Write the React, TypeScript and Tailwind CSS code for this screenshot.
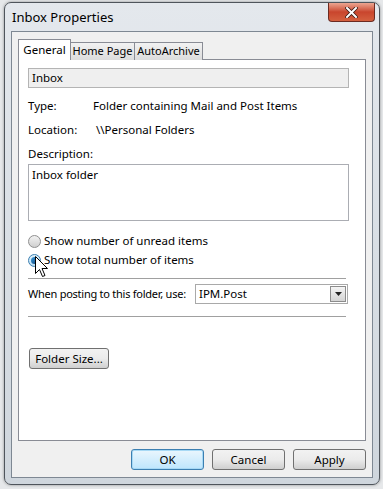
import React from "react";

const font = { fontFamily: '"Noto Sans", "Open Sans", sans-serif' };

function Radio({ checked }: { checked?: boolean }) {
  return (
    <span
      className={
        "flex h-[13px] w-[13px] shrink-0 items-center justify-center rounded-full border " +
        (checked
          ? "border-[#3c7fb1] bg-gradient-to-b from-[#dff1fb] to-[#b9dcf2]"
          : "border-[#8f8f8f] bg-gradient-to-b from-[#f2f2f2] to-[#cfcfcf]")
      }
    >
      {checked && (
        <span className="h-[7px] w-[7px] rounded-full bg-gradient-to-br from-[#3fa0e0] to-[#0d3f78]" />
      )}
    </span>
  );
}

function Button({ label, focused, className = "" }: { label: string; focused?: boolean; className?: string }) {
  return (
    <button
      className={
        "flex h-[21px] items-center justify-center whitespace-nowrap rounded-[3px] border text-[11.5px] text-black " +
        (focused
          ? "border-[#3c7fb1] bg-gradient-to-b from-[#eaf6fd] to-[#bee6fd] shadow-[inset_0_0_0_1px_#a7d9f5] "
          : "border-[#707070] bg-gradient-to-b from-[#f2f2f2] via-[#ebebeb] to-[#cfcfcf] ") +
        className
      }
    >
      {label}
    </button>
  );
}

export default function App() {
  return (
    <div className="relative h-[489px] w-[383px] overflow-hidden bg-[#e6e8ea] pl-[4px] pt-[2px]" style={font}>
      <div className="flex h-[483px] w-[376px] flex-col rounded-[7px] border border-[#4f555c] bg-gradient-to-b from-[#e4e8ed] via-[#d9dfe5] to-[#cfd6dd] shadow-[0_0_3px_rgba(0,0,0,0.4)]">
        {/* title bar */}
        <div className="flex h-[28px] items-start justify-between">
          <span className="whitespace-nowrap pl-[7px] pt-[5px] text-[13px] text-black">Inbox Properties</span>
          <div className="mr-[4px] flex h-[19px] w-[47px] items-center justify-center rounded-b-[4px] border border-t-0 border-[#6b2a21] bg-gradient-to-b from-[#eba591] via-[#c9452d] to-[#d4603f]">
            <svg width="13" height="11" viewBox="0 0 13 11">
              <path d="M2 1 L11 10 M11 1 L2 10" stroke="#3a1a14" strokeWidth="3.6" strokeLinecap="square" />
              <path d="M2 1 L11 10 M11 1 L2 10" stroke="#ffffff" strokeWidth="2" strokeLinecap="square" />
            </svg>
          </div>
        </div>

        {/* client area */}
        <div className="mx-[6px] flex h-[447px] flex-col border border-[#7e8893] bg-[#f0f0f0] px-[6px] pt-[7px]">
          {/* tabs */}
          <div className="relative z-10 flex h-[21px] items-end whitespace-nowrap text-[11px] text-black">
            <div className="flex h-[21px] w-[53px] items-center justify-center border border-b-0 border-[#898c95] bg-white pb-[1px] text-[11.5px]">
              General
            </div>
            <div className="flex h-[18px] w-[64px] items-center justify-center border border-l-0 border-b-0 border-[#898c95] bg-gradient-to-b from-[#f2f2f2] to-[#dcdcdc]">
              Home Page
            </div>
            <div className="flex h-[18px] w-[68px] items-center justify-center border border-l-0 border-b-0 border-[#898c95] bg-gradient-to-b from-[#f2f2f2] to-[#dcdcdc]">
              AutoArchive
            </div>
          </div>

          {/* tab page */}
          <div className="-mt-[1px] flex h-[382px] flex-col whitespace-nowrap border border-[#898c95] bg-white px-[9px] pt-[8px] text-[11.5px] text-black">
            <div className="flex h-[20px] w-[321px] items-center border border-[#b4b4b4] bg-[#efefef] pl-[3px]">
              Inbox
            </div>

            <div className="mt-[9px] flex h-[18px] items-center">
              <span className="w-[65px]">Type:</span>
              <span>Folder containing Mail and Post Items</span>
            </div>
            <div className="mt-[6px] flex h-[18px] items-center">
              <span className="w-[68px]">Location:</span>
              <span>\\Personal Folders</span>
            </div>
            <div className="mt-[6px] flex h-[18px] items-center">Description:</div>
            <div className="mt-[1px] h-[57px] w-[321px] border border-[#abadb3] bg-white pl-[3px] pt-[1px]">
              Inbox folder
            </div>

            <div className="mt-[11px] flex h-[18px] items-center gap-[3px]">
              <Radio />
              <span>Show number of unread items</span>
            </div>
            <div className="mt-[1px] flex h-[18px] items-center gap-[3px]">
              <Radio checked />
              <span>Show total number of items</span>
            </div>

            <div className="mt-[9px] h-[1px] w-[318px] bg-[#a0a0a0]" />

            <div className="mt-[5px] flex h-[20px] items-center">
              <span className="w-[167px] text-[11px] tracking-[-0.25px]">When posting to this folder, use:</span>
              <div className="flex h-[20px] w-[153px] items-center justify-between border border-[#a9a9a9] bg-white pl-[3px] pr-[1px]">
                <span>IPM.Post</span>
                <span className="flex h-[16px] w-[16px] items-center justify-center border border-[#8c8c8c] bg-gradient-to-b from-[#f4f4f4] to-[#d4d4d4]">
                  <svg width="7" height="4" viewBox="0 0 7 4">
                    <path d="M0 0 H7 L3.5 4 Z" fill="#222" />
                  </svg>
                </span>
              </div>
            </div>

            <div className="mt-[12px] h-[1px] w-[318px] bg-[#a0a0a0]" />

            <Button label="Folder Size..." className="mt-[31px] ml-[1px] w-[80px]" />
          </div>

          {/* dialog buttons */}
          <div className="mt-[8px] flex justify-end gap-[8px]">
            <Button label="OK" focused className="w-[73px]" />
            <Button label="Cancel" className="w-[73px]" />
            <Button label="Apply" className="w-[73px]" />
          </div>
        </div>
      </div>

      {/* mouse pointer */}
      <svg className="absolute left-[35px] top-[256px]" width="14" height="23" viewBox="0 0 14 23">
        <path
          d="M0.5 0.5 L0.5 17.5 L4.5 13.5 L7.5 20.5 L10 19.5 L7 12.5 L12.5 12.5 Z"
          fill="#ffffff"
          stroke="#000000"
          strokeWidth="1"
          strokeLinejoin="round"
        />
      </svg>
    </div>
  );
}
